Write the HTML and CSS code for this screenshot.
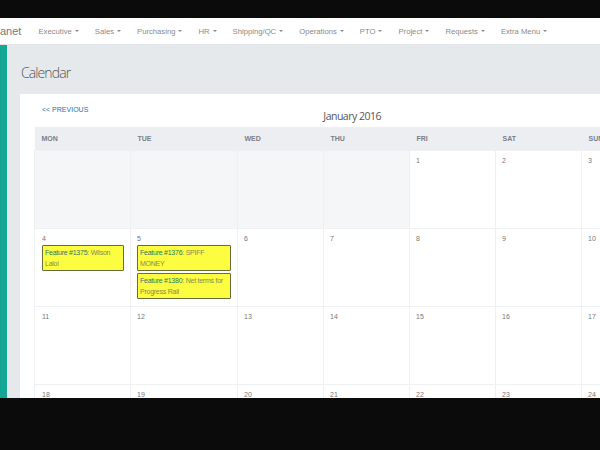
FILE: index.html
```html
<!DOCTYPE html>
<html lang="en">
<head>
  <meta charset="UTF-8" />
  <title>Calendar</title>
  <link rel="stylesheet" href="styles.css">
</head>
<body>
  <div class="letterbox"></div>

  <nav class="navbar">
    <span class="brand">anet</span>
    <a href="#" class="nav-item">Executive <span class="caret"></span></a>
    <a href="#" class="nav-item">Sales <span class="caret"></span></a>
    <a href="#" class="nav-item">Purchasing <span class="caret"></span></a>
    <a href="#" class="nav-item">HR <span class="caret"></span></a>
    <a href="#" class="nav-item">Shipping/QC <span class="caret"></span></a>
    <a href="#" class="nav-item">Operations <span class="caret"></span></a>
    <a href="#" class="nav-item">PTO <span class="caret"></span></a>
    <a href="#" class="nav-item">Project <span class="caret"></span></a>
    <a href="#" class="nav-item">Requests <span class="caret"></span></a>
    <a href="#" class="nav-item">Extra Menu <span class="caret"></span></a>
  </nav>

  <div class="main">
    <aside class="sidebar"></aside>

    <div class="content">
      <h1 class="page-title">Calendar</h1>

      <div class="card">
        <div class="cal-head">
          <a href="#" class="prev">&lt;&lt; PREVIOUS</a>
          <h2 class="month">January 2016</h2>
        </div>

        <table class="calendar">
          <colgroup>
            <col class="c-mon"><col class="c-tue"><col class="c-day"><col class="c-day">
            <col class="c-day"><col class="c-day"><col class="c-day">
          </colgroup>
          <thead>
            <tr>
              <th>Mon</th><th>Tue</th><th>Wed</th><th>Thu</th><th>Fri</th><th>Sat</th><th>Sun</th>
            </tr>
          </thead>
          <tbody>
            <tr>
              <td class="other"></td><td class="other"></td><td class="other"></td><td class="other"></td>
              <td><span class="num">1</span></td>
              <td><span class="num">2</span></td>
              <td><span class="num">3</span></td>
            </tr>
            <tr>
              <td>
                <span class="num">4</span>
                <div class="event"><a href="#">Feature #1375</a>: Wilson Laloi</div>
              </td>
              <td>
                <span class="num">5</span>
                <div class="event"><a href="#">Feature #1376</a>: SPIFF MONEY</div>
                <div class="event"><a href="#">Feature #1380</a>: Net terms for Progress Rail</div>
              </td>
              <td><span class="num">6</span></td>
              <td><span class="num">7</span></td>
              <td><span class="num">8</span></td>
              <td><span class="num">9</span></td>
              <td><span class="num">10</span></td>
            </tr>
            <tr>
              <td><span class="num">11</span></td>
              <td><span class="num">12</span></td>
              <td><span class="num">13</span></td>
              <td><span class="num">14</span></td>
              <td><span class="num">15</span></td>
              <td><span class="num">16</span></td>
              <td><span class="num">17</span></td>
            </tr>
            <tr>
              <td><span class="num">18</span></td>
              <td><span class="num">19</span></td>
              <td><span class="num">20</span></td>
              <td><span class="num">21</span></td>
              <td><span class="num">22</span></td>
              <td><span class="num">23</span></td>
              <td><span class="num">24</span></td>
            </tr>
          </tbody>
        </table>
      </div>
    </div>
  </div>

  <div class="letterbox bottom"></div>
</body>
</html>
```

FILE: styles.css
```css
* {
  margin: 0;
  padding: 0;
  box-sizing: border-box;
}

body {
  width: 600px;
  height: 450px;
  overflow: hidden;
  background-color: #e6e9ec;
  font-family: "Liberation Sans", Arial, sans-serif;
  color: #777;
  display: flex;
  flex-direction: column;
}

a {
  text-decoration: none;
}

.letterbox {
  height: 18px;
  flex-shrink: 0;
  background-color: #0b0b0b;
}

.letterbox.bottom {
  height: 52px;
}

/* Navbar */
.navbar {
  height: 27px;
  flex-shrink: 0;
  background-color: #ffffff;
  border-bottom: 1px solid #e2e5e8;
  display: flex;
  align-items: center;
  white-space: nowrap;
}

.brand {
  font-size: 11px;
  color: #777;
  padding-right: 9px;
}

.nav-item {
  font-size: 7.7px;
  color: #8a8a8a;
  padding: 0 8px;
  display: flex;
  align-items: center;
  gap: 3px;
}

.caret {
  width: 0;
  height: 0;
  border-left: 2.5px solid transparent;
  border-right: 2.5px solid transparent;
  border-top: 2.5px solid #8a8a8a;
}

/* Layout */
.main {
  flex: 1;
  display: flex;
  min-height: 0;
}

.sidebar {
  width: 7px;
  flex-shrink: 0;
  background-color: #14a794;
}

.content {
  padding: 0 0 0 13px;
}

.page-title {
  font-family: "Open Sans", sans-serif;
  font-weight: 300;
  font-size: 14px;
  letter-spacing: -0.9px;
  color: #555;
  height: 49px;
  line-height: 56px;
  padding-left: 1px;
}

.card {
  width: 662px;
  background-color: #ffffff;
  padding: 9px 14px 0;
}

.cal-head {
  display: flex;
  align-items: flex-start;
  height: 24px;
}

.prev {
  font-size: 7px;
  color: #2f6f9f;
  padding-left: 8px;
  line-height: 14px;
}

.month {
  flex: 1;
  text-align: center;
  font-family: "Open Sans", sans-serif;
  font-weight: 400;
  font-size: 10.5px;
  letter-spacing: -0.5px;
  color: #555;
  line-height: 27px;
  margin-right: 52px;
}

/* Calendar grid */
.calendar {
  border-collapse: collapse;
  table-layout: fixed;
  width: 634px;
}

.c-mon { width: 96px; }
.c-tue { width: 107px; }
.c-day { width: 86px; }

.calendar th {
  height: 23px;
  background-color: #eceef1;
  text-align: left;
  padding-left: 7px;
  font-size: 7px;
  font-weight: bold;
  text-transform: uppercase;
  color: #7a7f85;
}

.calendar td {
  height: 78px;
  vertical-align: top;
  padding: 6px 6px 0 6px;
  border: 1px solid #eef0f2;
}

.calendar td:first-child {
  padding-left: 7px;
}

.calendar td.other {
  background-color: #f4f6f8;
}

.num {
  display: block;
  font-size: 7px;
  color: #777;
  height: 10px;
}

.event {
  background-color: #fcfc40;
  border: 1px solid #6a6a3a;
  border-radius: 1px;
  font-size: 7px;
  letter-spacing: -0.25px;
  line-height: 11px;
  padding: 1px 2px;
  color: #8a8a55;
  margin-bottom: 2px;
}

.event a {
  color: #2f7a66;
}
```
